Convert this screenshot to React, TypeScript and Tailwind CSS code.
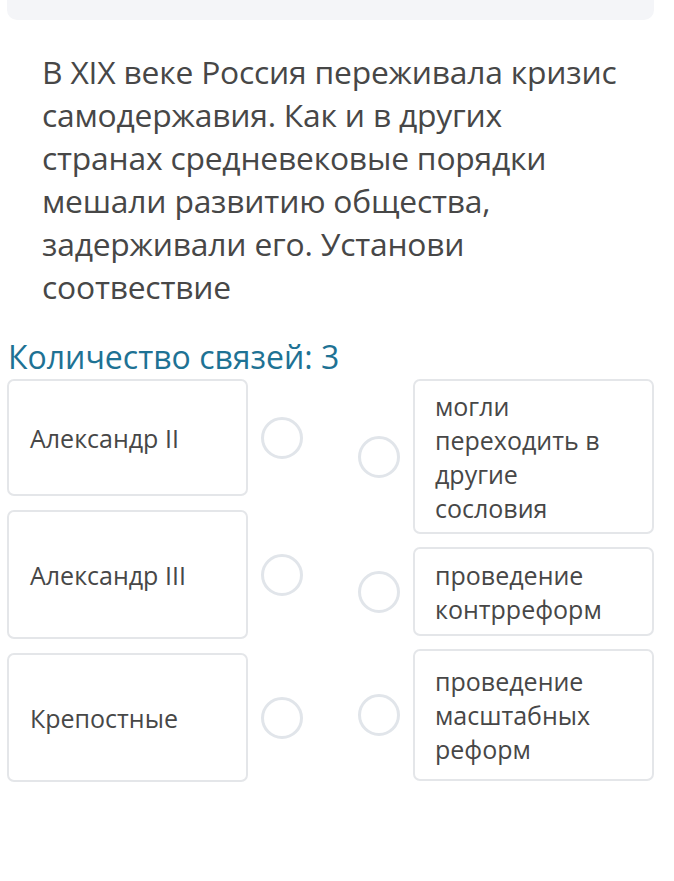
import React from 'react'

const leftItems = [
  { text: 'Александр II', h: 'h-[117px]' },
  { text: 'Александр III', h: 'h-[129px]' },
  { text: 'Крепостные', h: 'h-[129px]' },
]

const rightItems = [
  { text: 'могли переходить в другие сословия', h: 'h-[155px]' },
  { text: 'проведение контрреформ', h: 'h-[89px]' },
  { text: 'проведение масштабных реформ', h: 'h-[132px]' },
]

const questionLines = [
  'В XIX веке Россия переживала кризис',
  'самодержавия. Как и в других',
  'странах средневековые порядки',
  'мешали развитию общества,',
  'задерживали его. Установи',
  'соотвествие',
]

function Dot() {
  return <div className="h-[42px] w-[42px] shrink-0 rounded-full border-[3px] border-[#e1e5ea] bg-white" />
}

export default function App() {
  return (
    <div
      className="min-h-[881px] w-[674px] bg-white text-[#474747]"
      style={{ fontFamily: '"Open Sans", "Noto Sans", sans-serif' }}
    >
      <div className="mx-[7px] h-[20px] w-[647px] rounded-b-[10px] bg-[#f4f5f8]" />

      <p className="mt-[30px] pl-[42px] text-[31.8px] leading-[43px] tracking-[-0.2px] whitespace-nowrap text-[#474747]">
        {questionLines.map((line) => (
          <span key={line} className="block">
            {line}
          </span>
        ))}
      </p>

      <h2 className="mt-[29px] pl-[8px] text-[32px] leading-[40px] tracking-[0px] text-[#1e7294]">
        Количество связей: 3
      </h2>

      <div className="mt-[2px] flex pl-[7px]">
        <div className="flex w-[297px] flex-col gap-[14px]">
          {leftItems.map((item) => (
            <div key={item.text} className="flex items-center">
              <div
                className={`flex w-[241px] items-center rounded-[7px] border-2 border-[#e4e6e9] pl-[21px] text-[25px] leading-[34px] ${item.h}`}
              >
                {item.text}
              </div>
              <div className="ml-[13px]">
                <Dot />
              </div>
            </div>
          ))}
        </div>

        <div className="ml-[54px] flex w-[297px] flex-col gap-[13px]">
          {rightItems.map((item) => (
            <div key={item.text} className="flex items-center">
              <Dot />
              <div
                className={`ml-[13px] flex w-[241px] items-center rounded-[7px] border-2 border-[#e4e6e9] pl-[20px] pr-[24px] text-[25px] leading-[34px] ${item.h}`}
              >
                <span>{item.text}</span>
              </div>
            </div>
          ))}
        </div>
      </div>
    </div>
  )
}
